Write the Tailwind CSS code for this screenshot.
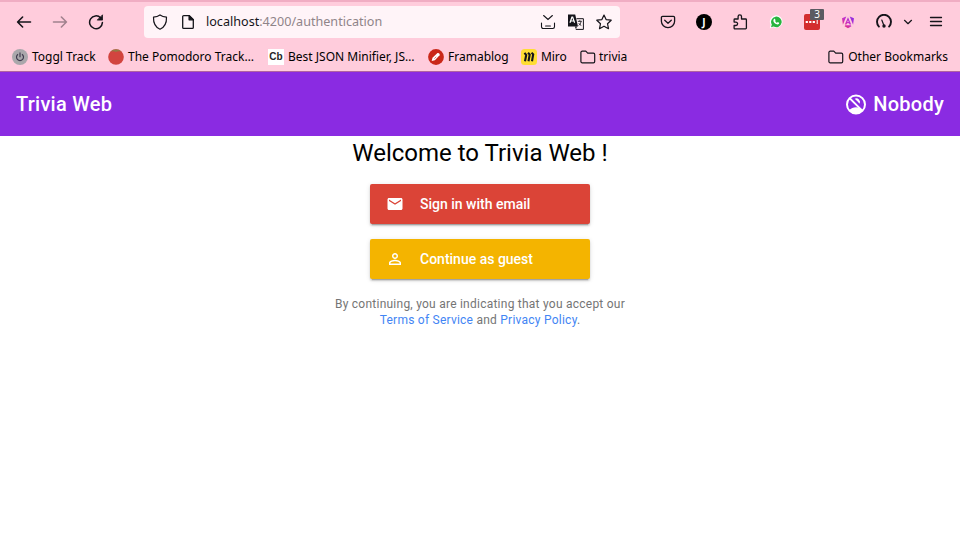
<!DOCTYPE html>
<html lang="en">
<head>
<meta charset="utf-8">
<title>Trivia Web</title>
<script src="https://cdn.jsdelivr.net/npm/@tailwindcss/browser@4"></script>
</head>
<body class="bg-white w-[960px] h-[539px] overflow-hidden font-['Roboto',sans-serif]">
<div class="h-[72px] bg-[#ffccdc] border-t-2 border-t-[#f0adc3] border-b border-b-[#b0649f] font-['Noto_Sans',sans-serif] text-[#15141a] flex flex-col">
  <div class="h-10 flex items-center pl-1.5 shrink-0">
    <div class="w-9 flex justify-center"><svg class="size-4" viewBox="0 0 16 16" fill="none" stroke="#15141a" stroke-width="1.6" stroke-linecap="round" stroke-linejoin="round"><path d="M14.5 8H1.700M6.600 3L1.600 8l5 5"/></svg></div>
    <div class="w-9 flex justify-center"><svg class="size-4 opacity-40" viewBox="0 0 16 16" fill="none" stroke="#15141a" stroke-width="1.6" stroke-linecap="round" stroke-linejoin="round"><path d="M1.500 8h12.800M9.400 3l5 5-5 5"/></svg></div>
    <div class="w-9 flex justify-center"><svg class="size-4" viewBox="0 0 16 16" fill="none" stroke="#15141a" stroke-width="1.5" stroke-linecap="round"><path d="M12.700 3.900A6.400 6.400 0 1 0 14.400 8.600"/><path d="M14.500 1.200v4.900H9.600z" fill="#15141a" stroke-width=".8" stroke-linejoin="round"/></svg></div>
    <div class="ml-[30px] w-[476px] h-8 rounded bg-[#fff4f8] flex items-center px-0.5 shrink-0">
      <div class="w-7 flex justify-center"><svg class="size-4" viewBox="0 0 16 16" fill="none" stroke="#15141a" stroke-width="1.2" stroke-linejoin="round"><path d="M8 .9C6.200 2.200 3.600 3 1.500 3.200 1.300 8.500 3 13 8 15.200 13 13 14.700 8.500 14.500 3.200 12.400 3 9.800 2.200 8 .9z"/></svg></div>
      <div class="w-7 flex justify-center"><svg class="size-4" viewBox="0 0 16 16" fill="none" stroke="#15141a" stroke-width="1.3" stroke-linejoin="round"><path d="M3.700 1.600h5.600l4 4v7.800a1 1 0 0 1-1 1H3.700a1 1 0 0 1-1-1V2.600a1 1 0 0 1 1-1z"/><path d="M9.100 1.600v4.200h4.200z" fill="#15141a"/></svg></div>
      <div class="ml-1 text-[12.6px] leading-5 text-[#8f8489]"><span class="text-[#15141a]">localhost</span>:4200/authentication</div>
      <div class="ml-auto w-7 flex justify-center"><svg class="size-4" viewBox="0 0 16 16" fill="none" stroke="#15141a" stroke-width="1.1" stroke-linecap="round"><path d="M3.600 1.500L8 5.500l4.400-4M1.500 9v3.800a1.700 1.700 0 0 0 1.700 1.700h9.600a1.700 1.700 0 0 0 1.700-1.700V9M5.600 12h4.800"/></svg></div>
      <div class="w-7 flex justify-center"><svg class="size-4" viewBox="0 0 16 16" fill="none"><path d="M8.500 4.700h6.900v10.700H7.800" stroke="#15141a"/><path d="M0 .5h7.200L10 12.500H0z" fill="#15141a"/><path d="M2 8.700l1.900-5.500h.8l1.900 5.500M2.800 7h3" stroke="#fff" stroke-width="1.200"/><path d="M9 12.500L8 15.300 6.800 12.500z" fill="#15141a"/><path d="M9.800 7.300h4M11.800 6.300v1M13 7.500c-.3 2-1.200 3.100-2.400 4M10.800 9.300c.7 1 1.500 1.700 2.500 2.200" stroke="#15141a" stroke-width=".9"/></svg></div>
      <div class="w-7 flex justify-center"><svg class="size-4" viewBox="0 0 16 16" fill="none" stroke="#15141a" stroke-width="1.200" stroke-linejoin="round"><path d="M8 1l2.100 4.600 5.100.6-3.700 3.500 1 5L8 12.200l-4.500 2.500 1-5L.8 6.200l5.100-.6z"/></svg></div>
    </div>
    <div class="ml-[30px] w-9 flex justify-center"><svg class="size-4" viewBox="0 0 16 16" fill="none" stroke="#15141a" stroke-width="1.300" stroke-linecap="round" stroke-linejoin="round"><path d="M2.600 2.400h10.800a1.200 1.200 0 0 1 1.200 1.200v3.700a6.600 6.300 0 0 1-13.200 0V3.600a1.200 1.200 0 0 1 1.200-1.200z"/><path d="M4.700 6.200L8 9.200l3.300-3"/></svg></div>
    <div class="w-9 flex justify-center"><div class="size-4 rounded-full bg-black text-white font-['Open_Sans',sans-serif] font-bold text-[10px] leading-4 text-center">J</div></div>
    <div class="w-9 flex justify-center"><svg class="size-4" viewBox="0 0 16 16" fill="none" stroke="#15141a" stroke-width="1.300" stroke-linejoin="round"><path d="M2.100 8.100V5.800a.8.8 0 0 1 .8-.8h3.200V2.500a1.700 1.700 0 0 1 3.400 0V5h4.100a.8.8 0 0 1 .8.8v8.300a.8.800 0 0 1-.8.8H2.900a.8.800 0 0 1-.8-.8v-2.600h1.800a1.700 1.700 0 0 0 0-3.400z"/></svg></div>
    <div class="w-9 flex justify-center"><svg class="size-4" viewBox="0 0 16 16"><path d="M1.800 14.200l.9-3.500A6.300 6.300 0 1 1 5.500 13.300z" fill="#fff"/><path d="M3 13.300l.8-2.700a5.300 5.300 0 1 1 1.900 1.900z" fill="#27b43e"/><path d="M6 5.100c.3-.4.900-.4 1.100.1l.5 1.100-.5.8c.4.900 1 1.400 1.800 1.800l.8-.8 1.400.7c.3.200 0 1-.4 1.300-.7.600-1.700.4-2.700-.1C6.600 9.300 5.700 8.200 5.400 7c-.1-.7 0-1.300.6-1.900z" fill="#fff"/></svg></div>
    <div class="w-9 flex justify-center"><div class="relative size-4 rounded-[2px] bg-[#d32d2e] flex items-center justify-center">
      <svg class="w-[14px] h-1" viewBox="0 0 14 4"><path d="M.7 1h2.200v2H.7zM4.200 1h2.200v2H4.200zM7.700 1h2.200v2H7.700zM11.700 0h1v4h-1z" fill="#fff"/></svg>
      <div class="absolute left-[6px] -top-[5px] w-[14px] h-[11px] rounded-[1px] bg-[#5b5b62] text-white text-[10px] leading-[11px] text-center">3</div></div></div>
    <div class="w-9 flex justify-center"><svg class="size-[14px]" viewBox="0 0 16 16"><defs><linearGradient id="ag" x1="0" y1="1" x2="1" y2="0"><stop stop-color="#f02862"/><stop offset=".5" stop-color="#c530ca"/><stop offset="1" stop-color="#812be8"/></linearGradient></defs><path d="M1.200 3.600L6 1.700 2.200 11zM14.800 3.600L10 1.700l3.800 9.300zM8 2.700l3.600 8.100H9.700L9.100 9.400H6.900l-.6 1.400H4.400zM8 6L7.200 8.100h1.600zM4.800 11.800h6.400l.7 1L8 15l-3.900-2.200z" fill="url(#ag)" fill-rule="evenodd"/></svg></div>
    <div class="w-9 flex justify-center"><svg class="size-4" viewBox="0 0 16 16" fill="none" stroke="#15141a" stroke-linecap="round"><path d="M2.900 12.600A7 7 0 1 1 13.100 12.600" stroke-width="1.900"/><path d="M5.800 6L7.900 11.500" stroke-width="1.200"/><circle cx="8" cy="12" r="1.700" fill="#15141a" stroke="none"/></svg></div>
    <div class="w-3 flex justify-center"><svg class="w-[10px] h-[6px]" viewBox="0 0 10 6" fill="none" stroke="#15141a" stroke-width="1.200" stroke-linecap="round" stroke-linejoin="round"><path d="M1.500 1.300L5 4.700l3.500-3.400"/></svg></div>
    <div class="ml-1 w-9 flex justify-center"><svg class="size-4" viewBox="0 0 16 16" stroke="#15141a" stroke-width="1.300" stroke-linecap="round"><path d="M2.500 3.500h11M2.500 7.500h11M2.500 11.500h11"/></svg></div>
  </div>
  <div class="h-[29px] flex items-center pl-3 pr-3 text-[12px] leading-4 whitespace-nowrap text-black">
    <div class="w-24 flex items-center gap-1"><svg class="size-4 shrink-0" viewBox="0 0 16 16" fill="none"><circle cx="8" cy="8" r="8" fill="#aaa7ab"/><path d="M6 5.200a3.500 3.500 0 1 0 4 0M8 3.500v4.700" stroke="#413c4f" stroke-width="1.200"/></svg><span>Toggl Track</span></div>
    <div class="w-40 flex items-center gap-1"><svg class="size-4 shrink-0" viewBox="0 0 16 16"><circle cx="8" cy="8" r="7.800" fill="#d2443f"/><path d="M2.500 2.500A7.800 7.800 0 0 1 13.500 2.500L10 2.200 8 3 6 2.200z" fill="#957a45"/></svg><span>The Pomodoro Track…</span></div>
    <div class="w-40 flex items-center gap-1"><div class="size-4 shrink-0 bg-white text-[#252525] font-['Liberation_Sans',sans-serif] font-bold text-[10px] leading-4 text-center">Cb</div><span>Best JSON Minifier, JS…</span></div>
    <div class="w-[93px] flex items-center gap-1"><svg class="size-4 shrink-0" viewBox="0 0 16 16"><circle cx="8" cy="8" r="7.900" fill="#ca2819"/><path d="M3.700 12l.8-3.200 5-4.700c1-.8 2.900 1 2.100 2.100L6.900 11.200z" fill="#fff"/><path d="M6.300 9.600l1.900-1.800" stroke="#ca2819" stroke-width=".6"/></svg><span>Framablog</span></div>
    <div class="w-[59px] flex items-center gap-1"><svg class="size-4 shrink-0" viewBox="0 0 16 16" fill="none"><rect width="16" height="16" rx="3.500" fill="#ffdd33"/><path d="M3.500 3.800L5.200 6 4 12.200M7 3.800l1.700 1.800-1.200 6.600M10.500 3.800l1.700 1.500-1.200 6.900" stroke="#15141a" stroke-width="2.100"/></svg><span class="tracking-[-0.1px]">Miro</span></div>
    <div class="flex items-center gap-[3px]"><svg class="size-4 shrink-0" viewBox="0 0 16 16" fill="none" stroke="#15141a" stroke-width="1.200" stroke-linejoin="round"><path d="M2.200 2.200h3.600l1.900 1.900h5.700a1.300 1.300 0 0 1 1.300 1.300v7.100a1.300 1.300 0 0 1-1.300 1.300H2.200a1.300 1.300 0 0 1-1.300-1.300v-9a1.300 1.300 0 0 1 1.300-1.300z"/></svg><span>trivia</span></div>
    <div class="ml-auto flex items-center gap-1"><svg class="size-4 shrink-0" viewBox="0 0 16 16" fill="none" stroke="#15141a" stroke-width="1.200" stroke-linejoin="round"><path d="M2.200 2.200h3.600l1.900 1.900h5.700a1.300 1.300 0 0 1 1.300 1.300v7.100a1.300 1.300 0 0 1-1.300 1.300H2.200a1.300 1.300 0 0 1-1.300-1.300v-9a1.300 1.300 0 0 1 1.300-1.300z"/></svg><span>Other Bookmarks</span></div>
  </div>
</div>
<header class="h-16 bg-[#8a2be2] px-4 flex items-center justify-between text-white font-medium text-xl tracking-[0.25px]">
  <span>Trivia Web</span>
  <div class="flex items-center gap-[5px]">
    <svg class="size-6" viewBox="0 0 24 24" fill="none"><circle cx="12" cy="12.500" r="9" stroke="#fff" stroke-width="2"/><path d="M5 18.300C7 16.200 9.300 15.200 12 15.200s5 1 7 3.100L16 21.200H8z" fill="#fff"/><path d="M5.600 6.100l12.300 12.300" stroke="#fff" stroke-width="2"/><path d="M10.700 6.700A3.800 3.800 0 0 1 15.700 11.700L13.700 9.700A1.700 1.700 0 0 0 12.500 8.500z" fill="#fff"/></svg>
    <span>Nobody</span>
  </div>
</header>
<main class="flex flex-col items-center text-black">
  <h1 class="text-2xl leading-8 mt-px">Welcome to Trivia Web !</h1>
  <button class="mt-[15px] w-[220px] h-10 rounded-[2px] bg-[#db4437] text-white text-sm font-medium flex items-center pl-4 gap-4 shadow-[0_2px_2px_0_rgba(0,0,0,.14),0_3px_1px_-2px_rgba(0,0,0,.2),0_1px_5px_0_rgba(0,0,0,.12)]">
    <svg class="size-[18px]" viewBox="0 0 24 24" fill="#fff"><path d="M20 4H4c-1.100 0-2 .9-2 2v12c0 1.100.9 2 2 2h16c1.100 0 2-.9 2-2V6c0-1.100-.9-2-2-2zm0 4l-8 5-8-5V6l8 5 8-5v2z"/></svg>
    <span>Sign in with email</span>
  </button>
  <button class="mt-[15px] w-[220px] h-10 rounded-[2px] bg-[#f4b400] text-white text-sm font-medium flex items-center pl-4 gap-4 shadow-[0_2px_2px_0_rgba(0,0,0,.14),0_3px_1px_-2px_rgba(0,0,0,.2),0_1px_5px_0_rgba(0,0,0,.12)]">
    <svg class="size-[18px]" viewBox="0 0 24 24" fill="#fff"><path d="M12 5.900a2.100 2.100 0 1 1 0 4.200 2.100 2.100 0 0 1 0-4.200m0 9c2.970 0 6.100 1.460 6.100 2.100v1.100H5.900V17c0-.64 3.130-2.100 6.100-2.100M12 4C9.790 4 8 5.790 8 8s1.790 4 4 4 4-1.790 4-4-1.790-4-4-4zm0 9c-2.670 0-8 1.340-8 4v3h16v-3c0-2.660-5.330-4-8-4z"/></svg>
    <span>Continue as guest</span>
  </button>
  <p class="mt-[17px] text-xs leading-4 text-center text-[#757575] tracking-[0.24px]">By continuing, you are indicating that you accept our<br><a class="text-[#4285f4]">Terms of Service</a> and <a class="text-[#4285f4]">Privacy Policy</a>.</p>
</main>
</body>
</html>
